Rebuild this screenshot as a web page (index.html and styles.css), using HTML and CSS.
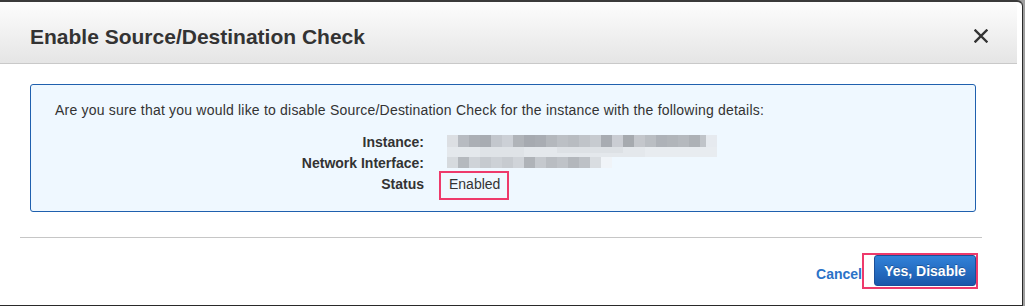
FILE: index.html
```html
<!DOCTYPE html>
<html>
<head>
<meta charset="utf-8">
<link rel="stylesheet" href="styles.css">
</head>
<body>
<div class="dialog">
  <div class="header">
    <h1 class="title">Enable Source/Destination Check</h1>
    <svg class="close" width="14" height="14" viewBox="0 0 14 14"><path d="M1.5 1.5 L12.5 12.5 M12.5 1.5 L1.5 12.5" stroke="#333" stroke-width="2.4" stroke-linecap="square" fill="none"/></svg>
  </div>
  <div class="body">
    <div class="info">
      <p class="question">Are you sure that you would like to disable Source/Destination Check for the instance with the following details:</p>
      <div class="details">
        <div class="label">Instance:</div>
        <div class="value">
          <svg class="blur" width="272" height="21" viewBox="0 0 272 21">
            <rect x="0" y="3" width="11" height="12" fill="#dcdfe3"/>
            <rect x="11" y="3" width="11" height="12" fill="#b7bbc1"/>
            <rect x="22" y="3" width="11" height="12" fill="#abafb5"/>
            <rect x="33" y="3" width="11" height="12" fill="#a8acb2"/>
            <rect x="44" y="3" width="11" height="12" fill="#c3c7cd"/>
            <rect x="55" y="3" width="11" height="12" fill="#ccd0d6"/>
            <rect x="66" y="3" width="11" height="12" fill="#b0b4b9"/>
            <rect x="77" y="3" width="11" height="12" fill="#a6aab0"/>
            <rect x="88" y="3" width="11" height="12" fill="#a9adb3"/>
            <rect x="99" y="3" width="11" height="12" fill="#b4b8bd"/>
            <rect x="110" y="3" width="11" height="12" fill="#bcc0c5"/>
            <rect x="121" y="3" width="11" height="12" fill="#b8bcc1"/>
            <rect x="132" y="3" width="11" height="12" fill="#c0c4c9"/>
            <rect x="143" y="3" width="11" height="12" fill="#c7cbd0"/>
            <rect x="154" y="3" width="11" height="12" fill="#a8acb2"/>
            <rect x="165" y="3" width="11" height="12" fill="#cacdd3"/>
            <rect x="176" y="3" width="11" height="12" fill="#a6aaaf"/>
            <rect x="187" y="3" width="11" height="12" fill="#c4c7cc"/>
            <rect x="198" y="3" width="11" height="12" fill="#babec3"/>
            <rect x="209" y="3" width="11" height="12" fill="#aeb2b8"/>
            <rect x="220" y="3" width="11" height="12" fill="#b1b5ba"/>
            <rect x="231" y="3" width="11" height="12" fill="#b5b9be"/>
            <rect x="242" y="3" width="11" height="12" fill="#adb1b6"/>
            <rect x="253" y="3" width="6" height="12" fill="#c0c4c9"/>
            <rect x="259" y="3" width="11" height="12" fill="#e6eaef"/>
            <rect x="0" y="15" width="270" height="6" fill="#e4e8ec"/>
            <rect x="33" y="15" width="44" height="6" fill="#dfe3e7"/>
            <rect x="110" y="15" width="66" height="6" fill="#dde1e5"/>
            <rect x="198" y="15" width="72" height="6" fill="#e8ecf0"/>
          </svg>
        </div>
        <div class="label">Network Interface:</div>
        <div class="value">
          <svg class="blur" width="272" height="21" viewBox="0 0 272 21">
            <rect x="0" y="0" width="270" height="4" fill="#e4e8ec"/>
            <rect x="33" y="0" width="44" height="4" fill="#dfe3e7"/>
            <rect x="198" y="0" width="72" height="4" fill="#e8ecf0"/>
            <rect x="0" y="4" width="11" height="11" fill="#d6dade"/>
            <rect x="11" y="4" width="11" height="11" fill="#b5b9be"/>
            <rect x="22" y="4" width="11" height="11" fill="#cfd3d8"/>
            <rect x="33" y="4" width="11" height="11" fill="#c6cacf"/>
            <rect x="44" y="4" width="11" height="11" fill="#cdd1d6"/>
            <rect x="55" y="4" width="11" height="11" fill="#c7cbd0"/>
            <rect x="66" y="4" width="11" height="11" fill="#d0d4d9"/>
            <rect x="77" y="4" width="11" height="11" fill="#afb3b8"/>
            <rect x="88" y="4" width="11" height="11" fill="#c5c9ce"/>
            <rect x="99" y="4" width="11" height="11" fill="#b9bdc2"/>
            <rect x="110" y="4" width="11" height="11" fill="#bfc3c8"/>
            <rect x="121" y="4" width="11" height="11" fill="#b3b7bc"/>
            <rect x="132" y="4" width="11" height="11" fill="#bdc1c6"/>
            <rect x="143" y="4" width="11" height="11" fill="#d9dde1"/>
            <rect x="154" y="4" width="11" height="11" fill="#f0f4f8"/>
          </svg>
        </div>
        <div class="label">Status</div>
        <div class="value status">
          <span>Enabled</span>
          <span class="highlight status-mark"></span>
        </div>
      </div>
    </div>
    <div class="divider"></div>
  </div>
  <div class="footer">
    <a class="cancel">Cancel</a>
    <div class="primary-wrap">
      <span class="highlight button-mark"></span>
      <button class="primary">Yes, Disable</button>
    </div>
  </div>
</div>
</body>
</html>
```

FILE: styles.css
```css
html, body {
  margin: 0;
  padding: 0;
}
body {
  width: 1025px;
  height: 306px;
  background: #9f9f9f;
  font-family: "Liberation Sans", Arial, Helvetica, sans-serif;
  color: #333;
  overflow: hidden;
}
.dialog {
  width: 1022px;
  height: 303px;
  background: #fff;
  border-top: 2px solid #3a3a3a;
  border-right: 1px solid #2a2a2a;
  border-bottom: 1px solid #2a2a2a;
  border-top-right-radius: 6px;
  display: flex;
  flex-direction: column;
}
.header {
  height: 38px;
  margin-right: 5px;
  padding: 23px 29px 0 30px;
  box-sizing: content-box;
  border-bottom: 1px solid #c9c9c9;
  background: linear-gradient(#fdfdfd, #e5e5e5);
  display: flex;
  align-items: flex-start;
  justify-content: space-between;
  flex: none;
}
.title {
  margin: 0;
  font-size: 21px;
  line-height: 23px;
  font-weight: bold;
  color: #333;
}
.close {
  display: block;
  margin-top: 4px;
}
.body {
  padding: 20px 46px 0 30px;
}
.info {
  border: 1px solid #1f60ae;
  border-radius: 3px;
  background: #eff8ff;
  padding: 15px 24px 13px 24px;
  height: 98px;
}
.question {
  margin: 0 0 12px 0;
  font-size: 14px;
  line-height: 20px;
  letter-spacing: 0.2px;
}
.details {
  display: grid;
  grid-template-columns: 369px auto;
  column-gap: 23px;
  font-size: 14px;
  line-height: 21px;
}
.label {
  text-align: right;
  font-weight: bold;
}
.value {
  position: relative;
  height: 21px;
}
.blur {
  display: block;
}
.status span:first-child {
  padding-left: 2px;
}
.highlight {
  position: absolute;
  border: 2px solid #ee3a6b;
  box-sizing: border-box;
  pointer-events: none;
}
.status-mark {
  left: -8px;
  top: -3px;
  width: 70px;
  height: 29px;
}
.divider {
  height: 1px;
  background: #c6c6c6;
  margin: 25px -6px 0 -10px;
}
.footer {
  display: flex;
  justify-content: flex-end;
  align-items: flex-start;
  padding: 17px 46px 0 0;
}
.cancel {
  font-size: 14px;
  font-weight: bold;
  color: #2a72c8;
  line-height: 16px;
  margin-top: 11px;
  margin-right: 12px;
}
.primary-wrap {
  position: relative;
}
.primary {
  position: relative;
  display: block;
  width: 102px;
  height: 31px;
  margin: 0;
  padding: 0;
  border: 1px solid #1c4f98;
  border-radius: 3px;
  background: linear-gradient(#3182d9, #1a58ab);
  color: #fff;
  font-family: "Liberation Sans", Arial, Helvetica, sans-serif;
  font-size: 14px;
  font-weight: bold;
  text-shadow: 0 -1px 0 rgba(0, 0, 0, 0.25);
}
.button-mark {
  left: -12px;
  top: -2px;
  width: 116px;
  height: 36px;
  background: #fff;
}
```
